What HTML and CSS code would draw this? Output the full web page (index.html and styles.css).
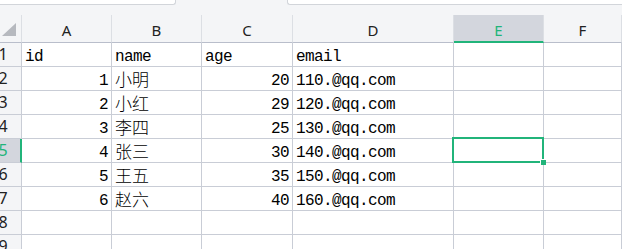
FILE: index.html
```html
<!DOCTYPE html>
<html lang="zh-CN">
<head>
  <meta charset="UTF-8" />
  <meta name="viewport" content="width=device-width, initial-scale=1.0" />
  <title>Sheet1</title>
  <link rel="stylesheet" href="styles.css">
</head>
<body>
  <div class="topbar">
    <div class="box box-left"></div>
    <div class="box box-right"></div>
  </div>

  <div class="sheet">
    <div class="corner">
      <svg width="22" height="27" viewBox="0 0 22 27"><polygon points="16,8 16,21 2,21" fill="#b6b9bf"/></svg>
    </div>
    <div class="col-head">A</div>
    <div class="col-head">B</div>
    <div class="col-head">C</div>
    <div class="col-head">D</div>
    <div class="col-head active">E</div>
    <div class="col-head">F</div>

    <div class="row-head"><span>1</span></div>
    <div class="cell">id</div>
    <div class="cell">name</div>
    <div class="cell">age</div>
    <div class="cell">email</div>
    <div class="cell"></div>
    <div class="cell"></div>

    <div class="row-head"><span>2</span></div>
    <div class="cell num">1</div>
    <div class="cell cjk">小明</div>
    <div class="cell num">20</div>
    <div class="cell">110.@qq.com</div>
    <div class="cell"></div>
    <div class="cell"></div>

    <div class="row-head"><span>3</span></div>
    <div class="cell num">2</div>
    <div class="cell cjk">小红</div>
    <div class="cell num">29</div>
    <div class="cell">120.@qq.com</div>
    <div class="cell"></div>
    <div class="cell"></div>

    <div class="row-head"><span>4</span></div>
    <div class="cell num">3</div>
    <div class="cell cjk">李四</div>
    <div class="cell num">25</div>
    <div class="cell">130.@qq.com</div>
    <div class="cell"></div>
    <div class="cell"></div>

    <div class="row-head active"><span>5</span></div>
    <div class="cell num">4</div>
    <div class="cell cjk">张三</div>
    <div class="cell num">30</div>
    <div class="cell">140.@qq.com</div>
    <div class="cell selected"><div class="select-box"><i class="handle"></i></div></div>
    <div class="cell"></div>

    <div class="row-head"><span>6</span></div>
    <div class="cell num">5</div>
    <div class="cell cjk">王五</div>
    <div class="cell num">35</div>
    <div class="cell">150.@qq.com</div>
    <div class="cell"></div>
    <div class="cell"></div>

    <div class="row-head"><span>7</span></div>
    <div class="cell num">6</div>
    <div class="cell cjk">赵六</div>
    <div class="cell num">40</div>
    <div class="cell">160.@qq.com</div>
    <div class="cell"></div>
    <div class="cell"></div>

    <div class="row-head"><span>8</span></div>
    <div class="cell"></div>
    <div class="cell"></div>
    <div class="cell"></div>
    <div class="cell"></div>
    <div class="cell"></div>
    <div class="cell"></div>

    <div class="row-head"><span>9</span></div>
    <div class="cell"></div>
    <div class="cell"></div>
    <div class="cell"></div>
    <div class="cell"></div>
    <div class="cell"></div>
    <div class="cell"></div>
  </div>
</body>
</html>
```

FILE: styles.css
```css
html, body {
  margin: 0;
  padding: 0;
  background: #ffffff;
  overflow: hidden;
}
body {
  width: 622px;
  height: 249px;
}
.topbar {
  height: 15px;
  background: #f4f5f7;
  display: flex;
  justify-content: space-between;
}
.box {
  height: 4px;
  background: #ffffff;
  border-bottom: 1px solid #d2d5da;
}
.box-left {
  width: 175px;
  border-right: 1px solid #d2d5da;
  border-bottom-right-radius: 3px;
}
.box-right {
  width: 334px;
  border-left: 1px solid #d2d5da;
  border-bottom-left-radius: 3px;
}
.sheet {
  display: grid;
  grid-template-columns: 22px 90px 90px 91px 161px 90px 1fr;
  grid-template-rows: 28px repeat(9, 24px);
}
.sheet > div {
  box-sizing: border-box;
}
.corner {
  background: #f4f5f7;
  border-right: 1px solid #dcdfe4;
  border-bottom: 1px solid #b9becb;
}
.corner svg {
  display: block;
}
.col-head {
  background: #f4f5f7;
  border-right: 1px solid #dcdfe4;
  border-bottom: 1px solid #b9becb;
  font-family: "Noto Sans", sans-serif;
  font-size: 15px;
  line-height: 20px;
  padding-top: 5px;
  text-align: center;
  color: #222;
}
.col-head.active {
  background: #d3d6dd;
  border-bottom: 2px solid #21b47a;
  color: #21b47a;
}
.row-head {
  background: #f4f5f7;
  border-right: 1px solid #c9cdd6;
  border-bottom: 1px solid #c9cdd6;
  overflow: hidden;
  font-family: "Noto Sans", sans-serif;
  font-size: 16px;
  line-height: 23px;
  color: #222;
}
.row-head span {
  display: block;
  width: 38px;
  margin-left: -16px;
  text-align: center;
}
.row-head.active {
  background: #d3d6dd;
  border-right: 2px solid #21b47a;
  color: #21b47a;
}
.cell {
  border-right: 1px solid #c9cdd6;
  border-bottom: 1px solid #c9cdd6;
  padding: 4px 3px 0 3px;
  font-family: "Liberation Mono", monospace;
  font-size: 16px;
  letter-spacing: -0.6px;
  line-height: 20px;
  color: #000;
  white-space: nowrap;
}
.cell.num {
  text-align: right;
}
.cell.cjk {
  font-family: "Noto Sans CJK SC", sans-serif;
  font-size: 17px;
  font-weight: 300;
  letter-spacing: 0;
  padding-top: 2px;
}
.cell.selected {
  position: relative;
}
.select-box {
  position: absolute;
  left: -2px;
  top: -2px;
  right: -1px;
  bottom: -1px;
  border: 2px solid #21b47a;
}
.handle {
  position: absolute;
  right: -4px;
  bottom: -4px;
  width: 5px;
  height: 5px;
  background: #21b47a;
  border-left: 1px solid #ffffff;
  border-top: 1px solid #ffffff;
}
```
